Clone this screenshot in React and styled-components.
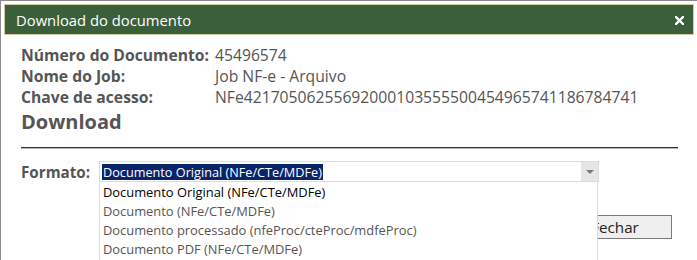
import React from "react";
import styled, { createGlobalStyle } from "styled-components";

const Global = createGlobalStyle`
  html, body { margin: 0; padding: 0; background: #fff; }
  body { font-family: "Open Sans", "Noto Sans", sans-serif; }
`;

const Dialog = styled.div`
  position: relative;
  width: 697px;
  height: 260px;
  box-sizing: border-box;
  border-top: 1px solid #8c8c8c;
  border-left: 1px solid #8c8c8c;
  padding: 3px 3px 0 3px;
  overflow: hidden;
  background: #fff;
`;

const TitleBar = styled.div`
  height: 31px;
  box-sizing: border-box;
  width: 690px;
  background: #3b5e3b;
  border: 1px solid #d3cba6;
  display: flex;
  align-items: center;
  justify-content: space-between;
  padding: 0 9px 0 11px;
  color: #fff;
  font-size: 14.8px;
`;

const CloseIcon = styled.svg`
  width: 9px;
  height: 9px;
  display: block;
  margin-top: 1px;
`;

const Body = styled.div`
  width: 690px;
  box-sizing: border-box;
  padding: 10px 16px 0 16px;
`;

const InfoGrid = styled.div`
  display: grid;
  grid-template-columns: 194px 1fr;
  color: #555;
  font-size: 15.7px;
  line-height: 21px;
  padding-left: 1px;
`;

const Label = styled.div`
  font-weight: 700;
`;

const Value = styled.div`
  font-weight: 400;
`;

const Heading = styled.h2`
  margin: 0 0 0 1px;
  font-size: 20px;
  line-height: 28px;
  font-weight: 700;
  color: #555;
  padding-bottom: 11px;
  border-bottom: 1px solid #333;
  box-shadow: 0 1px 0 #b5b5b5;
`;

const FormRow = styled.div`
  display: flex;
  align-items: center;
  margin-top: 13px;
  padding-left: 1px;
`;

const FormLabel = styled.div`
  width: 78px;
  font-weight: 700;
  font-size: 15.2px;
  color: #555;
`;

const SelectWrap = styled.div`
  position: relative;
  width: 500px;
`;

const SelectBox = styled.div`
  height: 21px;
  box-sizing: border-box;
  border: 1px solid #dcdcdc;
  display: flex;
  align-items: center;
  padding: 0 0 0 2px;
`;

const SelectedText = styled.span`
  background: #0a246a;
  color: #fff;
  font-size: 12.7px;
  line-height: 16px;
  padding: 0 1px;
  white-space: nowrap;
`;

const Arrow = styled.div`
  margin-left: auto;
  width: 17px;
  height: 19px;
  background: #e6e6e6;
  display: flex;
  align-items: center;
  justify-content: center;
`;

const Triangle = styled.div`
  width: 0;
  height: 0;
  border-left: 4px solid transparent;
  border-right: 4px solid transparent;
  border-top: 4px solid #7a7a7a;
`;

const List = styled.ul`
  position: absolute;
  top: 21px;
  left: 0;
  width: 499px;
  height: 120px;
  margin: 0;
  padding: 1px 0 0 0;
  list-style: none;
  box-sizing: border-box;
  background: #fff;
  border: 1px solid #dcdcdc;
  border-top: none;
  z-index: 2;
`;

const Option = styled.li`
  font-size: 12.9px;
  line-height: 19px;
  padding-left: 3px;
  white-space: nowrap;
  color: ${(p) => (p.$active ? "#000" : "#555")};
`;

const Footer = styled.div`
  display: flex;
  justify-content: flex-end;
  margin-top: 33px;
  padding-right: 6px;
`;

const Button = styled.button`
  width: 117px;
  height: 24px;
  box-sizing: border-box;
  background: #efefef;
  border: 1px solid #7a7a7a;
  font-family: inherit;
  font-size: 15.2px;
  color: #222;
  padding: 0 0 0 3px;
  line-height: 20px;
`;

const options = [
  "Documento Original (NFe/CTe/MDFe)",
  "Documento (NFe/CTe/MDFe)",
  "Documento processado (nfeProc/cteProc/mdfeProc)",
  "Documento PDF (NFe/CTe/MDFe)",
];

export default function App() {
  return (
    <>
      <Global />
      <Dialog>
        <TitleBar>
          <span>Download do documento</span>
          <CloseIcon viewBox="0 0 9 9">
            <path d="M1 1 L8 8 M8 1 L1 8" stroke="#fff" strokeWidth="2.4" strokeLinecap="square" />
          </CloseIcon>
        </TitleBar>
        <Body>
          <InfoGrid>
            <Label>Número do Documento:</Label>
            <Value>45496574</Value>
            <Label>Nome do Job:</Label>
            <Value>Job NF-e - Arquivo</Value>
            <Label>Chave de acesso:</Label>
            <Value>NFe42170506255692000103555500454965741186784741</Value>
          </InfoGrid>
          <Heading>Download</Heading>
          <FormRow>
            <FormLabel>Formato:</FormLabel>
            <SelectWrap>
              <SelectBox>
                <SelectedText>{options[0]}</SelectedText>
                <Arrow>
                  <Triangle />
                </Arrow>
              </SelectBox>
              <List>
                {options.map((o, i) => (
                  <Option key={o} $active={i === 0}>
                    {o}
                  </Option>
                ))}
              </List>
            </SelectWrap>
          </FormRow>
          <Footer>
            <Button>Fechar</Button>
          </Footer>
        </Body>
      </Dialog>
    </>
  );
}
